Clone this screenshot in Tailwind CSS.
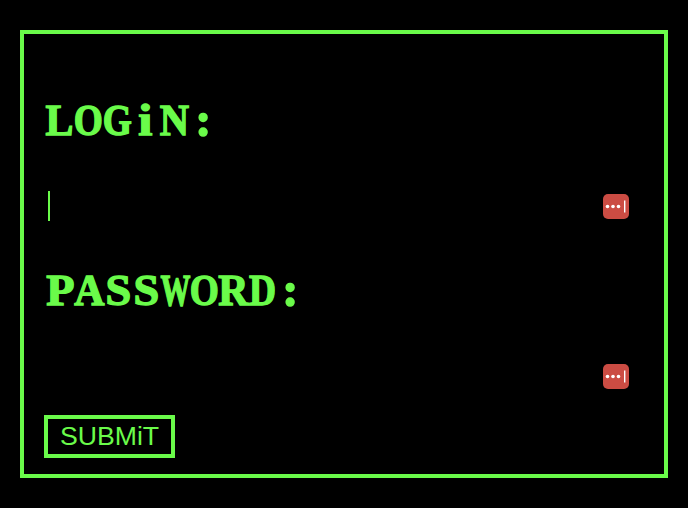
<!doctype html>
<html>
<head>
<meta charset="utf-8">
<script src="https://cdn.jsdelivr.net/npm/@tailwindcss/browser@4"></script>
</head>
<body class="bg-black h-[508px] overflow-hidden">
<form class="ml-5 mt-[30px] w-[648px] h-[448px] border-4 border-[#6afb4a] flex flex-col pl-5 pr-[35px] text-[#6afb4a]">
  <div class="mt-[60px] ml-px h-[54px] leading-[54px] font-['Liberation_Serif',serif] font-bold text-[44px] [-webkit-text-stroke:1.4px_#6afb4a] whitespace-nowrap">
    <span class="w-[28.8px] inline-flex justify-center scale-x-[0.95]">L</span><span class="w-[28.8px] inline-flex justify-center scale-x-[0.85]">O</span><span class="w-[28.8px] inline-flex justify-center scale-x-[0.85]">G</span><span class="w-[28.8px] inline-flex justify-center scale-x-[1.15]">i</span><span class="w-[28.8px] inline-flex justify-center scale-x-[0.92]">N</span><span class="w-[28.8px] inline-flex justify-center scale-110">:</span>
  </div>
  <div class="mt-[43px] h-[30px] flex items-center justify-between">
    <div class="ml-1 w-0.5 h-[30px] bg-[#6afb4a]"></div>
    <svg class="w-[26px] h-[25px]" viewBox="0 0 26 25"><rect width="26" height="25" rx="5" fill="#cb4c43"/><circle cx="4.5" cy="12.5" r="1.8" fill="#fff"/><circle cx="10" cy="12.5" r="1.8" fill="#fff"/><circle cx="15.5" cy="12.5" r="1.8" fill="#fff"/><rect x="21" y="6.5" width="1.4" height="12" fill="#fff"/></svg>
  </div>
  <div class="mt-[43px] ml-0.5 h-[54px] leading-[54px] font-['Liberation_Serif',serif] font-bold text-[44px] [-webkit-text-stroke:1.4px_#6afb4a] whitespace-nowrap">
    <span class="w-[28.8px] inline-flex justify-center scale-x-[1.05]">P</span><span class="w-[28.8px] inline-flex justify-center scale-x-[0.95]">A</span><span class="w-[28.8px] inline-flex justify-center scale-x-[1.05]">S</span><span class="w-[28.8px] inline-flex justify-center scale-x-[1.05]">S</span><span class="w-[28.8px] inline-flex justify-center scale-x-[0.68]">W</span><span class="w-[28.8px] inline-flex justify-center scale-x-[0.85]">O</span><span class="w-[28.8px] inline-flex justify-center scale-x-[0.95]">R</span><span class="w-[28.8px] inline-flex justify-center scale-x-[0.85]">D</span><span class="w-[28.8px] inline-flex justify-center scale-110">:</span>
  </div>
  <div class="mt-[43px] h-[30px] flex items-center justify-end">
    <svg class="w-[26px] h-[25px]" viewBox="0 0 26 25"><rect width="26" height="25" rx="5" fill="#cb4c43"/><circle cx="4.5" cy="12.5" r="1.8" fill="#fff"/><circle cx="10" cy="12.5" r="1.8" fill="#fff"/><circle cx="15.5" cy="12.5" r="1.8" fill="#fff"/><rect x="21" y="6.5" width="1.4" height="12" fill="#fff"/></svg>
  </div>
  <button type="button" class="mt-[24px] self-start w-[131px] h-[43px] border-4 border-[#6afb4a] font-['Liberation_Sans',sans-serif] text-[26.67px] leading-[31px] text-center">SUBMiT</button>
</form>
</body>
</html>
